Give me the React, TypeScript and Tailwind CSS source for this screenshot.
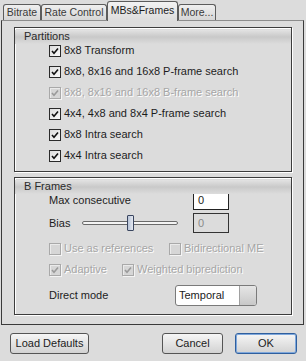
import React from 'react';

const Check = ({ checked, disabled }: { checked?: boolean; disabled?: boolean }) => (
  <span
    className={
      disabled
        ? 'flex items-center justify-center w-[12px] h-[12px] border border-[#a9a9a9] bg-[#d6d6d6] shadow-[inset_1px_1px_0_#eaeaea,1px_1px_0_#f4f4f4]'
        : 'flex items-center justify-center w-[12px] h-[12px] border border-[#2a2a2a] bg-gradient-to-br from-[#dcdcdc] to-[#fafafa]'
    }
  >
    {checked && (
      <svg width="10" height="10" viewBox="0 0 10 10">
        <polyline
          points="2,5 4,7.3 8,2.6"
          fill="none"
          stroke={disabled ? '#9a9a9a' : '#111'}
          strokeWidth="1.6"
        />
      </svg>
    )}
  </span>
);

const CheckRow = ({ label, checked, disabled }: { label: string; checked?: boolean; disabled?: boolean }) => (
  <div className="flex items-center gap-[3px]">
    <Check checked={checked} disabled={disabled} />
    <span className={disabled ? 'text-[#a6a6a6] [text-shadow:1px_1px_0_#fff]' : ''}>{label}</span>
  </div>
);

const Group = ({ title, children, className }: { title: string; children: React.ReactNode; className: string }) => (
  <div
    className={`ml-[12px] w-[278px] border border-[#3c3c3c] shadow-[1px_1px_0_#fff,inset_1px_1px_0_#fff] ${className}`}
  >
    <div className="h-[12px] relative">
      <div className="absolute left-0 right-0 top-[2px] h-[14px] bg-gradient-to-b from-[#e2e2e2] via-[#c9c9c9] to-[#dcdcdc]" />
      <span className="relative pl-[9px] leading-[12px] text-[#2a2a2a]">{title}</span>
    </div>
    {children}
  </div>
);

const Tab = ({ label, w }: { label: string; w: string }) => (
  <div
    className={`${w} h-[16px] flex items-center justify-center border border-b-0 border-[#5c5c5c] rounded-t-[3px] bg-gradient-to-b from-[#efefef] to-[#d6d6d6] text-[#3a3a3a]`}
  >
    {label}
  </div>
);

const Btn = ({ label, w, def }: { label: string; w: string; def?: boolean }) => (
  <div
    className={
      def
        ? `${w} h-[21px] flex items-center justify-center rounded-[3px] border border-[#2f5f9e] shadow-[inset_0_0_0_1px_#7fa8dc] bg-gradient-to-b from-[#f6f6f6] to-[#d2d2d2]`
        : `${w} h-[21px] flex items-center justify-center rounded-[3px] border border-[#555] bg-gradient-to-b from-[#f6f6f6] to-[#d2d2d2]`
    }
  >
    {label}
  </div>
);

export default function App() {
  return (
    <div className="w-[306px] h-[361px] bg-[#dcdcdc] font-['Liberation_Sans',Arial,sans-serif] text-[11px] text-[#1c1c1c] overflow-hidden">
      <div className="flex items-end h-[20px] pl-[3px] text-[10.5px]">
        <Tab label="Bitrate" w="w-[38px]" />
        <Tab label="Rate Control" w="w-[66px]" />
        <div className="relative top-px z-10 w-[71px] h-[20px] flex items-center justify-center pb-[2px] border border-b-0 border-[#5c5c5c] rounded-t-[3px] bg-gradient-to-b from-[#f2f2f2] to-[#dcdcdc] text-[#1c1c1c]">
          MBs&amp;Frames
        </div>
        <Tab label="More..." w="w-[38px]" />
      </div>

      <div className="ml-px w-[303px] h-[305px] border border-[#3a3a3a] border-t-[#8c8c8c] pt-[6px]">
        <Group title="Partitions" className="pb-[5px]">
          <div className="pl-[34px]">
            {[
              ['8x8 Transform', true, false],
              ['8x8, 8x16 and 16x8 P-frame search', true, false],
              ['8x8, 8x16 and 16x8 B-frame search', true, true],
              ['4x4, 4x8 and 8x4 P-frame search', true, false],
              ['8x8 Intra search', true, false],
              ['4x4 Intra search', true, false],
            ].map(([l, c, d]) => (
              <div key={l as string} className="h-[21px] flex items-center">
                <CheckRow label={l as string} checked={c as boolean} disabled={d as boolean} />
              </div>
            ))}
          </div>
        </Group>

        <Group title="B Frames" className="mt-[5px] pb-[8px]">
          <div className="pl-[34px]">
            <div className="h-[20px] flex items-center">
              <span className="w-[144px]">Max consecutive</span>
              <div className="w-[36px] h-[20px] border border-[#222] bg-white flex items-center pl-[4px]">0</div>
            </div>
            <div className="mt-[3px] h-[20px] flex items-center">
              <span className="w-[33px]">Bias</span>
              <div className="relative w-[96px] h-[16px] flex items-center">
                <div className="w-full h-[4px] rounded-[2px] border border-[#6a6a6a] bg-[#f4f4f4]" />
                <div className="absolute left-[45px] top-0 w-[7px] h-[16px] rounded-[1px] border border-[#3a4660] bg-gradient-to-r from-[#b8c4d8] to-[#e4e8f0]" />
              </div>
              <div className="ml-[15px] w-[36px] h-[20px] border border-[#333] flex items-center pl-[4px] text-[#8a8a8a]">0</div>
            </div>
            <div className="mt-[5px] h-[21px] flex items-center">
              <div className="w-[120px]">
                <CheckRow label="Use as references" disabled />
              </div>
              <CheckRow label="Bidirectional ME" disabled />
            </div>
            <div className="h-[21px] flex items-center">
              <div className="w-[73px]">
                <CheckRow label="Adaptive" checked disabled />
              </div>
              <CheckRow label="Weighted biprediction" checked disabled />
            </div>
            <div className="mt-[5px] h-[21px] flex items-center">
              <span className="w-[126px]">Direct mode</span>
              <div className="flex w-[82px] h-[21px] rounded-[3px] border border-[#7a7a7a] bg-white overflow-hidden">
                <span className="flex-1 flex items-center pl-[3px]">Temporal</span>
                <span className="w-[17px] border-l border-[#a0a0a0] bg-gradient-to-b from-[#e6e6e6] to-[#c8c8c8]" />
              </div>
            </div>
          </div>
        </Group>
      </div>

      <div className="flex items-center mt-[8px] pl-[10px]">
        <Btn label="Load Defaults" w="w-[79px]" />
        <div className="ml-auto flex gap-[12px] mr-[9px]">
          <Btn label="Cancel" w="w-[61px]" />
          <Btn label="OK" w="w-[62px]" def />
        </div>
      </div>
    </div>
  );
}
